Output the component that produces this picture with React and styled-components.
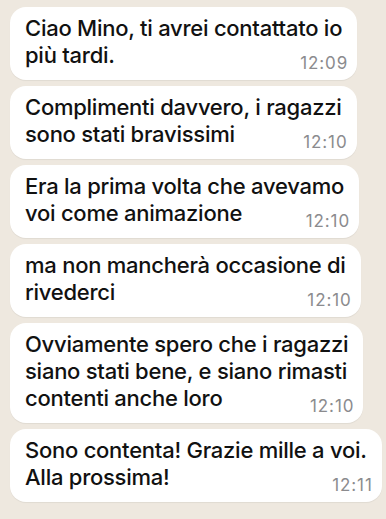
import React from 'react';
import styled, { createGlobalStyle } from 'styled-components';

const GlobalStyle = createGlobalStyle`
  html, body {
    margin: 0;
    padding: 0;
    background-color: #eee8df;
  }
  body {
    font-family: 'Inter', 'Liberation Sans', sans-serif;
  }
`;

const Chat = styled.div`
  display: flex;
  flex-direction: column;
  align-items: flex-start;
  gap: 6px;
  width: 386px;
  height: 519px;
  box-sizing: border-box;
  padding: 7px 4px 0 10px;
  background-color: #eee8df;
  overflow: hidden;
`;

const Bubble = styled.div`
  display: grid;
  box-sizing: border-box;
  padding: 8px 15px 6px 15px;
  background-color: #ffffff;
  border-radius: 16px;
  box-shadow: 0 1px 1px rgba(0, 0, 0, 0.06);
`;

const Text = styled.p`
  grid-area: 1 / 1;
  margin: 0 0 5px;
  font-size: 22px;
  font-weight: 500;
  letter-spacing: -0.25px;
  line-height: 27px;
  color: #111111;
  white-space: nowrap;
`;

const Time = styled.span`
  grid-area: 1 / 1;
  justify-self: end;
  align-self: end;
  margin: 0 -6px 2px 0;
  font-size: 17px;
  line-height: 17px;
  letter-spacing: 0.9px;
  color: #8b8b8e;
`;

const messages = [
  { id: 1, lines: ['Ciao Mino, ti avrei contattato io', 'più tardi.'], time: '12:09' },
  { id: 2, lines: ['Complimenti davvero, i ragazzi', 'sono stati bravissimi'], time: '12:10' },
  { id: 3, lines: ['Era la prima volta che avevamo', 'voi come animazione'], time: '12:10' },
  { id: 4, lines: ['ma non mancherà occasione di', 'rivederci'], time: '12:10' },
  {
    id: 5,
    lines: [
      'Ovviamente spero che i ragazzi',
      'siano stati bene, e siano rimasti',
      'contenti anche loro',
    ],
    time: '12:10',
  },
  { id: 6, lines: ['Sono contenta! Grazie mille a voi.', 'Alla prossima!'], time: '12:11' },
];

function Message({ lines, time }) {
  return (
    <Bubble>
      <Text>
        {lines.map((line, i) => (
          <React.Fragment key={i}>
            {i > 0 && <br />}
            {line}
          </React.Fragment>
        ))}
      </Text>
      <Time>{time}</Time>
    </Bubble>
  );
}

export default function App() {
  return (
    <>
      <GlobalStyle />
      <Chat>
        {messages.map(m => (
          <Message key={m.id} lines={m.lines} time={m.time} />
        ))}
      </Chat>
    </>
  );
}
